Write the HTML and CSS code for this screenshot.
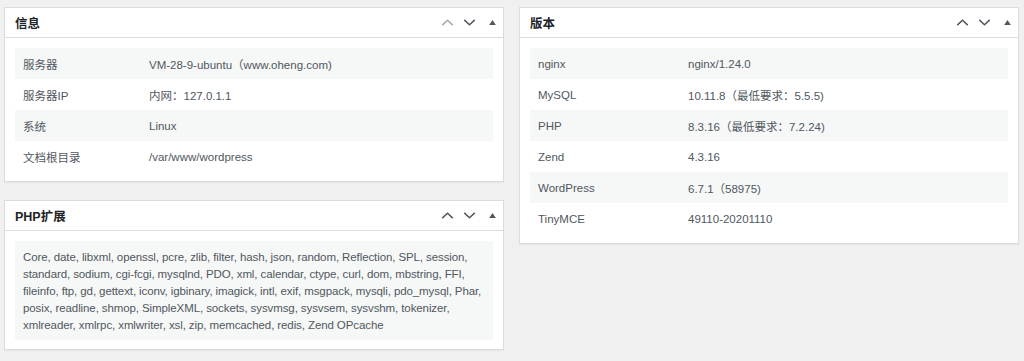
FILE: index.html
```html
<!DOCTYPE html>
<html lang="zh-CN">
<head>
  <meta charset="UTF-8">
  <meta name="viewport" content="width=device-width, initial-scale=1.0">
  <title>站点健康 - 信息</title>
  <link rel="stylesheet" href="styles.css">
</head>
<body>
  <div class="columns">
    <div class="column">
      <div class="postbox">
        <div class="postbox-header">
          <h2>信息</h2>
          <div class="handle-actions">
            <svg class="handle disabled" viewBox="0 0 14 8"><path d="M1 7 L7 1.5 L13 7" /></svg>
            <svg class="handle" viewBox="0 0 14 8"><path d="M1 1 L7 6.5 L13 1" /></svg>
            <svg class="toggle" viewBox="0 0 8 6"><path d="M4 0 L8 6 L0 6 Z" /></svg>
          </div>
        </div>
        <div class="inside">
          <table class="info-table info-narrow">
            <tr><td>服务器</td><td>VM-28-9-ubuntu（www.oheng.com)</td></tr>
            <tr><td>服务器IP</td><td>内网：127.0.1.1</td></tr>
            <tr><td>系统</td><td>Linux</td></tr>
            <tr><td>文档根目录</td><td>/var/www/wordpress</td></tr>
          </table>
        </div>
      </div>

      <div class="postbox">
        <div class="postbox-header">
          <h2>PHP扩展</h2>
          <div class="handle-actions">
            <svg class="handle" viewBox="0 0 14 8"><path d="M1 7 L7 1.5 L13 7" /></svg>
            <svg class="handle" viewBox="0 0 14 8"><path d="M1 1 L7 6.5 L13 1" /></svg>
            <svg class="toggle" viewBox="0 0 8 6"><path d="M4 0 L8 6 L0 6 Z" /></svg>
          </div>
        </div>
        <div class="inside">
          <p class="ext-list">Core, date, libxml, openssl, pcre, zlib, filter, hash, json, random, Reflection, SPL, session, standard, sodium, cgi-fcgi, mysqlnd, PDO, xml, calendar, ctype, curl, dom, mbstring, FFI, fileinfo, ftp, gd, gettext, iconv, igbinary, imagick, intl, exif, msgpack, mysqli, pdo_mysql, Phar, posix, readline, shmop, SimpleXML, sockets, sysvmsg, sysvsem, sysvshm, tokenizer, xmlreader, xmlrpc, xmlwriter, xsl, zip, memcached, redis, Zend OPcache</p>
        </div>
      </div>
    </div>

    <div class="column">
      <div class="postbox">
        <div class="postbox-header">
          <h2>版本</h2>
          <div class="handle-actions">
            <svg class="handle" viewBox="0 0 14 8"><path d="M1 7 L7 1.5 L13 7" /></svg>
            <svg class="handle" viewBox="0 0 14 8"><path d="M1 1 L7 6.5 L13 1" /></svg>
            <svg class="toggle" viewBox="0 0 8 6"><path d="M4 0 L8 6 L0 6 Z" /></svg>
          </div>
        </div>
        <div class="inside">
          <table class="info-table info-wide">
            <tr><td>nginx</td><td>nginx/1.24.0</td></tr>
            <tr><td>MySQL</td><td>10.11.8（最低要求：5.5.5)</td></tr>
            <tr><td>PHP</td><td>8.3.16（最低要求：7.2.24)</td></tr>
            <tr><td>Zend</td><td>4.3.16</td></tr>
            <tr><td>WordPress</td><td>6.7.1（58975)</td></tr>
            <tr><td>TinyMCE</td><td>49110-20201110</td></tr>
          </table>
        </div>
      </div>
    </div>
  </div>
</body>
</html>
```

FILE: styles.css
```css
body {
  margin: 0;
  padding: 7px 5px 0 4px;
  background: #f0f0f1;
  font-family: 'Liberation Sans', 'Noto Sans CJK SC', sans-serif;
  font-size: 11.5px;
  color: #50575e;
}
.columns {
  display: grid;
  grid-template-columns: 500px 500px;
  column-gap: 15px;
  align-items: start;
}
.postbox {
  background: #fff;
  border: 1px solid #dcdcde;
  box-shadow: 0 1px 1px rgba(0, 0, 0, 0.04);
  margin-bottom: 18px;
}
.postbox-header {
  display: flex;
  align-items: center;
  justify-content: space-between;
  height: 29px;
  border-bottom: 1px solid #dcdcde;
  padding: 0 7px 0 10px;
}
.postbox-header h2 {
  margin: 0;
  font-size: 12.5px;
  font-weight: 700;
  color: #1d2327;
}
.handle-actions {
  display: flex;
  align-items: center;
  gap: 9px;
}
.handle {
  width: 13px;
  height: 7px;
  fill: none;
  stroke: #50575e;
  stroke-width: 1.7;
}
.handle.disabled {
  stroke: #a7aaad;
}
.toggle {
  width: 7px;
  height: 5px;
  fill: #50575e;
  margin-left: 4px;
}
.inside {
  padding: 10px 10px 9px;
}
.info-table {
  width: 100%;
  border-collapse: collapse;
}
.info-table td {
  height: 31px;
  padding: 0 8px;
  vertical-align: middle;
}
.info-table tr:nth-child(odd) {
  background: #f6f7f7;
}
.info-narrow td:first-child {
  width: 110px;
}
.info-wide td:first-child {
  width: 134px;
}
.ext-list {
  margin: 0;
  background: #f6f7f7;
  padding: 8px 8px 6px;
  line-height: 17px;
  letter-spacing: -0.1px;
}
```
